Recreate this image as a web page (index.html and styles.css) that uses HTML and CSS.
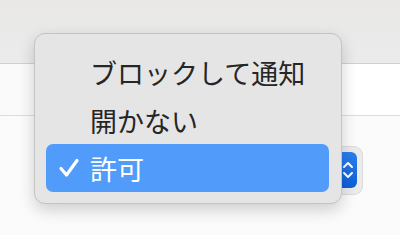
FILE: index.html
```html
<!DOCTYPE html>
<html lang="ja">
<head>
  <meta charset="UTF-8" />
  <title>通知設定</title>
  <link rel="stylesheet" href="styles.css">
</head>
<body>
  <div class="page">
    <header class="toolbar"></header>
    <div class="row"></div>
    <div class="row row-select">
      <div class="popup-button">
        <span class="popup-blue">
          <svg width="10" height="22" viewBox="0 0 10 22">
            <path d="M1 8 L5 4 L9 8 M1 14 L5 18 L9 14" fill="none" stroke="#fff" stroke-width="2" stroke-linecap="round" stroke-linejoin="round"/>
          </svg>
        </span>
      </div>
    </div>

    <div class="menu">
      <ul>
        <li><span class="check"></span>ブロックして通知</li>
        <li><span class="check"></span>開かない</li>
        <li class="selected">
          <span class="check">
            <svg width="22" height="22" viewBox="0 0 22 22">
              <path d="M3 11.5 L8.5 18 L19 3.5" fill="none" stroke="#fff" stroke-width="3.2" stroke-linecap="round" stroke-linejoin="round"/>
            </svg>
          </span>許可
        </li>
      </ul>
    </div>
  </div>
</body>
</html>
```

FILE: styles.css
```css
* {
  box-sizing: border-box;
  margin: 0;
  padding: 0;
}

body {
  width: 400px;
  height: 235px;
  overflow: hidden;
  background-color: #ffffff;
  font-family: "Noto Sans CJK JP", "Noto Sans", sans-serif;
}

.page {
  position: relative;
  width: 400px;
  height: 235px;
}

.toolbar {
  height: 64px;
  background: linear-gradient(#e9e8e7, #ebebeb);
  border-bottom: 1px solid #cfcfcf;
}

.row {
  height: 52px;
  border-bottom: 1px solid #dcdcdc;
  background: linear-gradient(90deg, #f9f9f9, #ffffff 30%);
}

.row-select {
  display: flex;
  justify-content: flex-end;
  padding: 31px 38px 0 0;
  border-bottom: none;
  height: 119px;
  background: #fbfbfb;
}

.popup-button {
  width: 48px;
  height: 47px;
  padding: 5px 5px 5px 4px;
  border-radius: 8px;
  background-color: #ebebeb;
  box-shadow: 0 0 0 1px #dadada;
  display: flex;
  justify-content: flex-end;
}

.popup-blue {
  width: 27px;
  height: 36px;
  border-radius: 6px;
  background: linear-gradient(#2a7ff0, #0d5fd8);
  display: flex;
  align-items: center;
  padding-left: 13px;
}

.menu {
  position: absolute;
  left: 34px;
  top: 33px;
  width: 308px;
  height: 171px;
  padding: 14px 12px 11px 11px;
  background-color: #e5e5e5;
  border: 1px solid #c4c4c4;
  border-radius: 11px;
  box-shadow: 0 6px 16px rgba(0, 0, 0, 0.18);
}

.menu ul {
  list-style: none;
}

.menu li {
  height: 48px;
  display: flex;
  align-items: center;
  font-size: 27px;
  color: #262626;
  border-radius: 7px;
}

.menu .check {
  width: 44px;
  padding-left: 12px;
  display: flex;
  align-items: center;
}

.menu li.selected {
  background-color: #519cfa;
  color: #ffffff;
}
```
